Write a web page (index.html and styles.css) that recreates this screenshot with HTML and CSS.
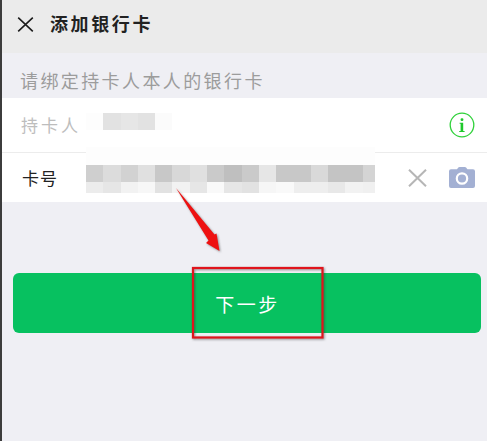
FILE: index.html
```html
<!DOCTYPE html>
<html lang="zh">
<head>
<meta charset="utf-8">
<title>添加银行卡</title>
<link rel="stylesheet" href="styles.css">
</head>
<body>
<div class="page">
  <header class="topbar">
    <svg class="close" viewBox="0 0 16 15"><path d="M.7.7 15.3 14.3M15.3.7.7 14.3"/></svg>
    <h1 class="title">添加银行卡</h1>
  </header>
  <p class="hint">请绑定持卡人本人的银行卡</p>
  <section class="form">
    <div class="row row-first">
      <span class="label label-muted">持卡人</span>
      <svg class="info" viewBox="0 0 26 26">
        <circle cx="13" cy="13" r="11.8"/>
        <rect class="info-dot" x="11.6" y="6.2" width="2.8" height="2.8" rx="1.2"/>
        <path class="info-stem" d="M10.6 10.8h3.6v8.2h1.4v1h-5.4v-1h1.4v-7.2h-1z"/>
      </svg>
    </div>
    <div class="row row-second">
      <span class="label label-tight">卡号</span>
      <svg class="clear" viewBox="0 0 19 18"><path d="M1 .7 18 17.3M18 .7 1 17.3"/></svg>
      <svg class="camera" viewBox="0 0 26 21">
        <path class="camera-body" fill-rule="evenodd" d="M8 2.2 9.3.6Q9.8 0 10.6 0h5.2q.8 0 1.3.6l1.3 1.6h5.6q2 0 2 2V19q0 2-2 2H2q-2 0-2-2V4.2q0-2 2-2zM13 5.2a6.3 6.3 0 1 0 0 12.6 6.3 6.3 0 0 0 0-12.6zM13 7.4a4.1 4.1 0 1 1 0 8.2 4.1 4.1 0 0 1 0-8.2z"/>
      </svg>
    </div>
    <div class="mosaic mosaic-name">
      <i class="fd"></i><i class="e2"></i><i class="e6"></i><i class="e2"></i><i class="fb"></i>
      <i class="no"></i><i class="fb"></i><i class="f9"></i><i class="no"></i><i class="no"></i>
    </div>
    <div class="mosaic-band"></div>
    <div class="mosaic mosaic-number">
      <i class="cf"></i><i class="dc"></i><i class="d2"></i><i class="e0"></i><i class="c8"></i><i class="d8"></i><i class="e0"></i><i class="ca"></i><i class="bf"></i><i class="ca"></i><i class="e6"></i><i class="c8"></i><i class="c8"></i><i class="d9"></i><i class="c4"></i><i class="c4"></i><i class="d4"></i>
      <i class="ec"></i><i class="e6"></i><i class="f2"></i><i class="f7"></i><i class="e2"></i><i class="f2"></i><i class="e6"></i><i class="f9"></i><i class="e6"></i><i class="e2"></i><i class="f6"></i><i class="f9"></i><i class="ee"></i><i class="ee"></i><i class="e8"></i><i class="f2"></i><i class="f0"></i>
    </div>
  </section>
  <button class="next" type="button">下一步</button>
  <svg class="marks" viewBox="0 0 487 441">
    <path class="arrow" d="M176 188 214.500 234.500 216.500 233.500 219.500 251 206 243 208.500 240.500z"/>
    <rect class="box" x="193" y="268" width="129.500" height="69.500"/>
  </svg>
</div>
</body>
</html>
```

FILE: styles.css
```css
* { box-sizing: border-box; }

html, body {
  margin: 0;
  padding: 0;
  background: #efeff4;
}

.page {
  position: relative;
  width: 487px;
  height: 441px;
  overflow: hidden;
  background: #efeff4;
  border-left: 2px solid #3c3c3c;
  font-family: "Noto Sans CJK SC", "Noto Sans", sans-serif;
}

.topbar {
  display: flex;
  align-items: center;
  height: 53px;
  padding: 0 0 8px 15px;
  background: #ebebeb;
}

.close {
  width: 17px;
  height: 15px;
  margin-top: 3px;
  fill: none;
  stroke: #1c1c1c;
  stroke-width: 1.6;
}

.title {
  margin: 0 0 0 16px;
  font-size: 18px;
  line-height: 24px;
  font-weight: 700;
  letter-spacing: 2.600px;
  color: #222;
}

.hint {
  display: flex;
  align-items: center;
  height: 45px;
  margin: 0;
  padding: 8px 0 0 18px;
  font-size: 18px;
  letter-spacing: 2.400px;
  color: #9c9c9c;
}

.form {
  position: relative;
  background: #fff;
}

.row {
  display: flex;
  align-items: center;
  padding-left: 19px;
}

.row-first {
  height: 55px;
  padding-right: 12px;
  padding-bottom: 1px;
  border-bottom: 1px solid #ececec;
}

.row-second {
  height: 49px;
  padding-left: 20px;
  padding-right: 12px;
}

.label {
  font-size: 17px;
  letter-spacing: 3px;
  color: #222;
}

.label-muted {
  color: #bdbdbd;
}

.label-tight {
  letter-spacing: 1px;
}

.info {
  width: 26px;
  height: 26px;
  margin-left: auto;
  fill: none;
  stroke: #2fd13a;
  stroke-width: 1.3;
}

.info-dot,
.info-stem {
  fill: #1fc92c;
  stroke: none;
}

.clear {
  width: 19px;
  height: 18px;
  margin-left: auto;
  fill: none;
  stroke: #b6b6b6;
  stroke-width: 2;
}

.camera {
  width: 26px;
  height: 21px;
  margin-left: 22px;
}

.camera-body {
  fill: #a3b0d3;
}

.mosaic {
  position: absolute;
  display: grid;
  grid-template-columns: repeat(17, 17.3px);
  overflow: hidden;
}

.mosaic-name {
  left: 84px;
  top: 15px;
  width: 87px;
  grid-template-rows: 17px 17px;
}

.mosaic-band {
  position: absolute;
  left: 84px;
  top: 49px;
  width: 289px;
  height: 18px;
  background: #fdfdfd;
}

.mosaic-number {
  left: 84px;
  top: 67px;
  width: 289px;
  grid-template-rows: 17px 11px;
}

.no { background: transparent; }
.bf { background: #bfbfbf; }
.c4 { background: #c4c4c4; }
.c8 { background: #c8c8c8; }
.ca { background: #cacaca; }
.cf { background: #cfcfcf; }
.d2 { background: #d2d2d2; }
.d4 { background: #d4d4d4; }
.d8 { background: #d8d8d8; }
.d9 { background: #d9d9d9; }
.dc { background: #dcdcdc; }
.e0 { background: #e0e0e0; }
.e2 { background: #e2e2e2; }
.e6 { background: #e6e6e6; }
.e8 { background: #e8e8e8; }
.ec { background: #ececec; }
.ee { background: #eeeeee; }
.f0 { background: #f0f0f0; }
.f2 { background: #f2f2f2; }
.f6 { background: #f6f6f6; }
.f7 { background: #f7f7f7; }
.f9 { background: #f9f9f9; }
.fb { background: #fbfbfb; }
.fd { background: #fdfdfd; }

.next {
  display: block;
  width: 468px;
  height: 60px;
  margin: 71px 0 0 11px;
  padding: 0 0 0 1px;
  border: 0;
  border-radius: 6px;
  background: #07c160;
  font-family: inherit;
  font-size: 19px;
  letter-spacing: 2.500px;
  color: #fff;
}

.marks {
  position: absolute;
  left: -2px;
  top: 0;
  width: 487px;
  height: 441px;
  pointer-events: none;
}

.arrow {
  fill: #ee1111;
  filter: drop-shadow(1px 1.500px 1px rgba(60, 60, 60, 0.55));
}

.box {
  fill: none;
  stroke: #e0141c;
  stroke-width: 2.200;
  filter: drop-shadow(1px 1.500px 1px rgba(50, 50, 50, 0.5));
}
```
